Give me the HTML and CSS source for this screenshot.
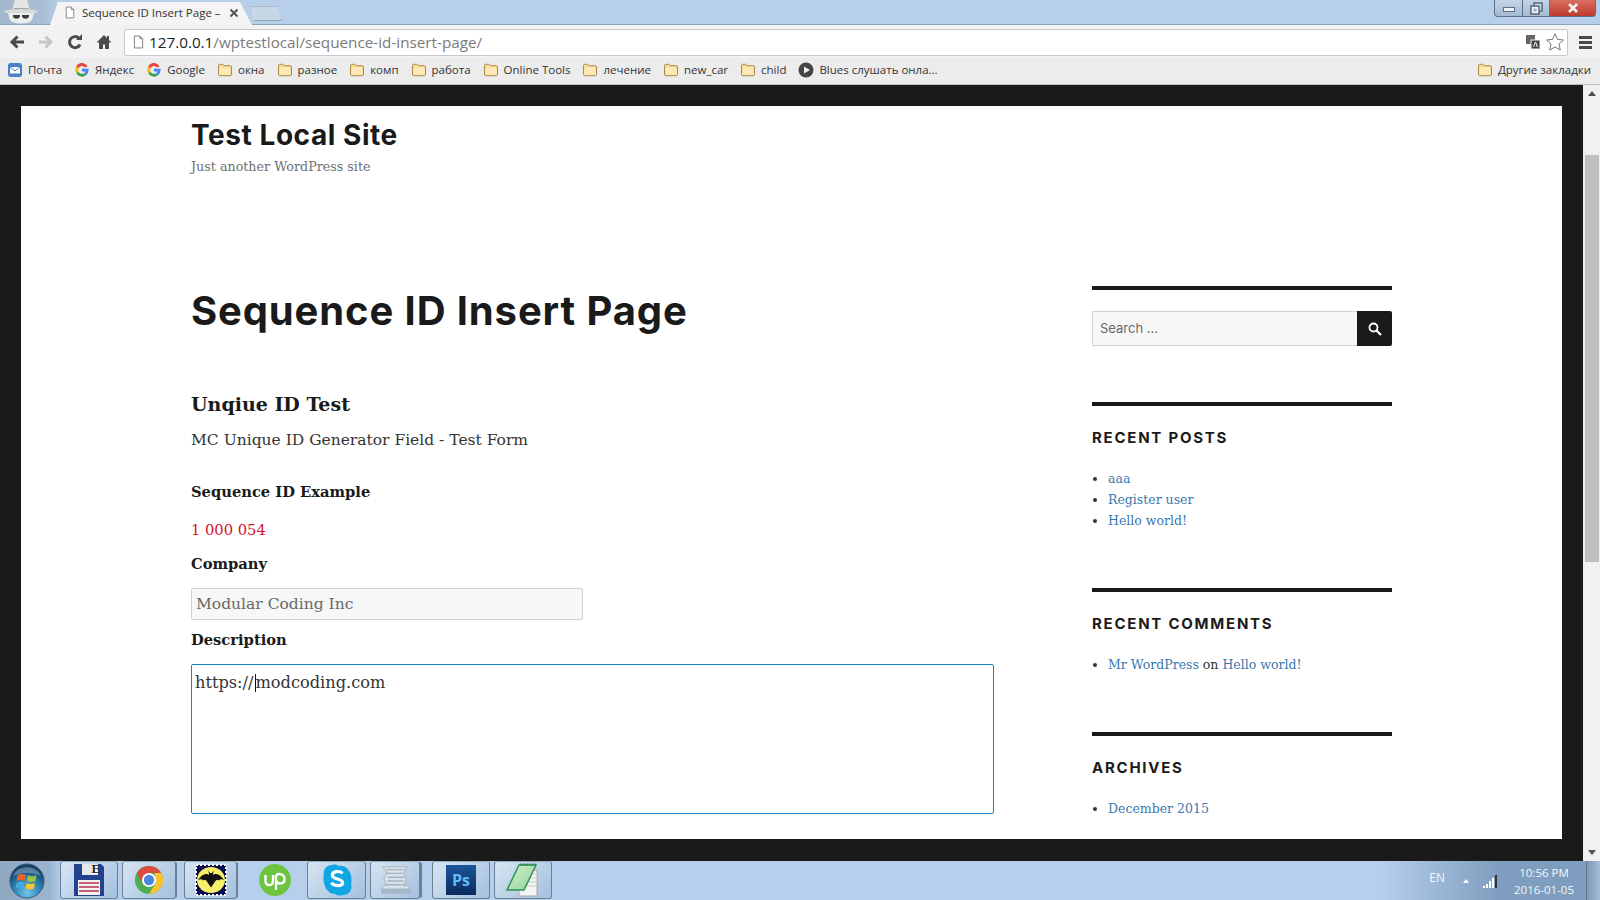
FILE: index.html
```html
<!DOCTYPE html>
<html lang="en">
<head>
<meta charset="utf-8">
<title>Sequence ID Insert Page</title>
<link rel="stylesheet" href="styles.css">
</head>
<body>
<svg class="defs" width="0" height="0" aria-hidden="true">
  <defs>
    <radialGradient id="orbfill" cx="50%" cy="85%" r="75%">
      <stop offset="0" stop-color="#6fc6e8"/>
      <stop offset=".55" stop-color="#2b7fae"/>
      <stop offset="1" stop-color="#123f66"/>
    </radialGradient>
    <linearGradient id="noteg" x1="0" y1="0" x2="1" y2="1">
      <stop offset="0" stop-color="#d5efd0"/>
      <stop offset="1" stop-color="#8fd39a"/>
    </linearGradient>
  </defs>
  <symbol id="folder" viewBox="0 0 16 14">
    <path d="M1.500 2.500c0-.8.5-1.200 1.200-1.200h3.200l1.200 1.400h6.200c.8 0 1.200.5 1.200 1.200v7.600c0 .8-.5 1.200-1.200 1.200H2.700c-.8 0-1.200-.5-1.200-1.200z" fill="#fbd98f" stroke="#a98a4e"/>
    <path d="M2.500 4.300h11v7.400h-11z" fill="#fde9b8"/>
  </symbol>
  <symbol id="google" viewBox="0 0 16 16">
    <path d="M13.600 4.200A6.600 6.600 0 0 0 2.200 4.600l2.300 1.900a3.700 3.700 0 0 1 6.500-1z" fill="#e8453c"/>
    <path d="M2.200 4.600a6.600 6.600 0 0 0 .1 7l2.300-1.800a3.700 3.700 0 0 1-.1-3.300z" fill="#f5bb14"/>
    <path d="M2.300 11.600a6.600 6.600 0 0 0 9.700 1.600l-2.200-1.900a3.700 3.700 0 0 1-5.200-1.500z" fill="#34a853"/>
    <path d="M14.600 8V6.700H8v2.700h3.700a3.400 3.400 0 0 1-1.900 1.900l2.200 1.900A6.500 6.500 0 0 0 14.600 8z" fill="#4285f4"/>
  </symbol>
  <symbol id="doc" viewBox="0 0 12 14">
    <path d="M1.500.5h6l3 3v10h-9z" fill="#fff" stroke="#777"/>
    <path d="M7.500.5v3h3" fill="none" stroke="#777"/>
  </symbol>
</svg>

<header class="browser">
  <div class="tabstrip">
    <svg class="incognito" viewBox="0 0 42 24" width="42" height="24">
      <path d="M12 11 15-1h12l3 12z" fill="#e3e4e4"/>
      <path d="M14 8h14l1 3H13z" fill="#a2a6a6"/>
      <ellipse cx="21" cy="11.500" rx="17" ry="2.500" fill="#d8dada"/>
      <path d="M8 13h26l-2 7c-3 4.500-19 4.500-22 0z" fill="#eceded"/>
      <path d="M13 15h7v1.500c-1 3-6 3-7 0zM22 15h7v1.500c-1 3-6 3-7 0z" fill="#3b3b3b"/>
    </svg>
    <div class="tab">
      <svg class="tab-doc" width="10" height="13"><use href="#doc"/></svg>
      <span class="tab-title">Sequence ID Insert Page –</span>
      <svg class="tab-close" viewBox="0 0 10 10" width="10" height="10"><path d="M1.500 1.500l7 7m0-7l-7 7" stroke="#555" stroke-width="2"/></svg>
    </div>
    <div class="newtab"></div>
    <div class="winctl">
      <div class="wbtn wmin"><span class="wmin-bar"></span></div>
      <div class="wbtn wmax"><svg viewBox="0 0 13 13" width="13" height="13"><path d="M4 1h8v8H4z" fill="#d3e0ec" stroke="#55677a" stroke-width="1.500"/><path d="M1 4h8v8H1z" fill="#eef3f8" stroke="#55677a" stroke-width="1.500"/><path d="M3.500 6.500h3v3h-3z" fill="#9fb3c7"/></svg></div>
      <div class="wbtn wclose"><svg viewBox="0 0 12 10" width="12" height="10"><path d="M2 1l8 8m0-8l-8 8" stroke="#f4f0ee" stroke-width="2.600"/></svg></div>
    </div>
  </div>

  <div class="toolbar">
    <svg class="tool" viewBox="0 0 18 18" width="18" height="18"><path d="M16 9H5M9.500 3.500 4 9l5.500 5.500" fill="none" stroke="#4b4b4b" stroke-width="3"/></svg>
    <svg class="tool" viewBox="0 0 18 18" width="18" height="18"><path d="M2 9h11M8.500 3.500 14 9l-5.500 5.500" fill="none" stroke="#c6c6c6" stroke-width="3"/></svg>
    <svg class="tool" viewBox="0 0 18 18" width="18" height="18"><path d="M14 11.500A5.500 5.500 0 1 1 13 5.300" fill="none" stroke="#4b4b4b" stroke-width="3"/><path d="M10 7h6V1z" fill="#4b4b4b"/></svg>
    <svg class="tool" viewBox="0 0 18 18" width="18" height="18"><path d="M9 2 1.500 9.500H4V16h4v-4.500h2V16h4V9.500h2.500L14 7V3h-2v2z" fill="#4b4b4b"/></svg>
    <div class="omnibox">
      <svg class="omni-doc" width="11" height="14"><use href="#doc"/></svg>
      <span class="url"><span class="url-host">127.0.0.1</span>/wptestlocal/sequence-id-insert-page/</span>
      <svg class="translate" viewBox="0 0 16 16" width="16" height="16"><rect x="1" y="1" width="9" height="9" fill="#666"/><rect x="6" y="6" width="9" height="9" fill="#444" stroke="#eee"/><path d="M8.500 13l2-5 2 5" fill="none" stroke="#fff"/></svg>
      <svg class="star" viewBox="0 0 20 20" width="20" height="20"><path d="M10 1.800l2.500 5.600 6 .6-4.500 4 1.300 6L10 15l-5.300 3 1.300-6-4.500-4 6-.6z" fill="#fff" stroke="#777"/></svg>
    </div>
    <div class="menu"><span></span><span></span><span></span></div>
  </div>

  <nav class="bookmarks">
    <span class="bm"><svg class="bm-icon" viewBox="0 0 16 16" width="16" height="16"><rect x="1" y="1" width="14" height="14" rx="3" fill="#4a7fc9"/><path d="M3 5h10v6.500H3z" fill="#fff"/><path d="M3 5l5 4 5-4" fill="none" stroke="#4a7fc9"/></svg>Почта</span>
    <span class="bm"><svg class="bm-icon" width="16" height="16"><use href="#google"/></svg>Яндекс</span>
    <span class="bm"><svg class="bm-icon" width="16" height="16"><use href="#google"/></svg>Google</span>
    <span class="bm"><svg class="bm-icon" width="16" height="14"><use href="#folder"/></svg>окна</span>
    <span class="bm"><svg class="bm-icon" width="16" height="14"><use href="#folder"/></svg>разное</span>
    <span class="bm"><svg class="bm-icon" width="16" height="14"><use href="#folder"/></svg>комп</span>
    <span class="bm"><svg class="bm-icon" width="16" height="14"><use href="#folder"/></svg>работа</span>
    <span class="bm"><svg class="bm-icon" width="16" height="14"><use href="#folder"/></svg>Online Tools</span>
    <span class="bm"><svg class="bm-icon" width="16" height="14"><use href="#folder"/></svg>лечение</span>
    <span class="bm"><svg class="bm-icon" width="16" height="14"><use href="#folder"/></svg>new_car</span>
    <span class="bm"><svg class="bm-icon" width="16" height="14"><use href="#folder"/></svg>child</span>
    <span class="bm"><svg class="bm-icon" viewBox="0 0 16 16" width="16" height="16"><circle cx="8" cy="8" r="7.500" fill="#444"/><path d="M6 4.500 12 8l-6 3.500z" fill="#eee"/></svg>Blues слушать онла...</span>
    <span class="bm bm-other"><svg class="bm-icon" width="16" height="14"><use href="#folder"/></svg>Другие закладки</span>
  </nav>
</header>

<div class="viewport">
  <main class="page">
    <div class="sheet">
      <div class="site-head">
        <div class="site-title">Test Local Site</div>
        <div class="site-desc">Just another WordPress site</div>
      </div>
      <div class="columns">
        <article class="content">
          <h1 class="page-title">Sequence ID Insert Page</h1>
          <h2 class="form-title">Unqiue ID Test</h2>
          <p class="form-sub">MC Unique ID Generator Field - Test Form</p>
          <div class="label label-first">Sequence ID Example</div>
          <div class="seq">1 000 054</div>
          <div class="label label-company">Company</div>
          <div class="company">Modular Coding Inc</div>
          <div class="label label-desc">Description</div>
          <div class="descr">https://<span class="caret"></span>modcoding.com</div>
        </article>
        <aside class="sidebar">
          <section class="widget widget-search">
            <div class="search">
              <div class="search-input">Search ...</div>
              <div class="search-btn"><svg viewBox="0 0 16 16" width="16" height="16"><circle cx="6.500" cy="6.500" r="4" fill="none" stroke="#fff" stroke-width="1.800"/><path d="M9.500 9.500 14 14" stroke="#fff" stroke-width="2.200"/></svg></div>
            </div>
          </section>
          <section class="widget widget-posts">
            <h3 class="widget-title">RECENT POSTS</h3>
            <ul class="links">
              <li><a>aaa</a></li>
              <li><a>Register user</a></li>
              <li><a>Hello world!</a></li>
            </ul>
          </section>
          <section class="widget widget-comments">
            <h3 class="widget-title">RECENT COMMENTS</h3>
            <ul class="links">
              <li><a>Mr WordPress</a> on <a>Hello world!</a></li>
            </ul>
          </section>
          <section class="widget">
            <h3 class="widget-title">ARCHIVES</h3>
            <ul class="links">
              <li><a>December 2015</a></li>
            </ul>
          </section>
        </aside>
      </div>
    </div>
  </main>
  <div class="scrollbar">
    <div class="sb-arrow"><span class="tri-up"></span></div>
    <div class="sb-track"><div class="sb-thumb"></div></div>
    <div class="sb-arrow"><span class="tri-down"></span></div>
  </div>
</div>

<footer class="taskbar">
  <svg class="orb" viewBox="0 0 38 38" width="36" height="36">
    <circle cx="19" cy="19" r="18" fill="url(#orbfill)" stroke="#3d5a75"/>
    <path d="M9 13c3-2 6-2 9 0l-1 6c-3-1.500-6-1.500-9 0z" fill="#e8612c"/>
    <path d="M20 13c3 1.500 6 1.500 9 0l-1 6c-3 1.500-6 1.500-9 0z" fill="#9cc53d"/>
    <path d="M8 21c3-1.500 5.500-1.500 8.500 0l-1 6c-3-1.500-5.500-1.500-8.500 0z" fill="#47a6e0"/>
    <path d="M18.500 21c3 1.500 6 1.500 9 0l-1 6c-3 1.500-6 1.500-9 0z" fill="#f6c52e"/>
    <path d="M4 14A15.500 13 0 0 1 34 14C26 9 12 9 4 14z" fill="#fff" opacity=".28"/>
  </svg>
  <div class="task task-a">
    <svg viewBox="0 0 32 36" width="32" height="36"><path d="M1 2h27l3 3v29H1z" fill="#24418f"/><path d="M9 2h16v11H9z" fill="#e5e5ea"/><path d="M19 3h6v9h-6z" fill="#fff"/><path d="M5 18h22v15H5z" fill="#f4f1f1"/><path d="M6 21h20M6 25h20M6 29h20" stroke="#b43450" stroke-width="1.600"/><text x="18.500" y="11" class="svg-e">E</text></svg>
  </div>
  <div class="task task-b">
    <svg viewBox="0 0 32 32" width="30" height="30"><circle cx="16" cy="16" r="15" fill="#4cae50"/><path d="M16 1a15 15 0 0 1 13 7.500H16zM3 8.500A15 15 0 0 1 16 1l.1 7.500L9.500 20z" fill="#dd4b3e"/><path d="M29 8.500A15 15 0 0 1 16 31l6.500-11-.5-11.500z" fill="#f6c431"/><circle cx="16" cy="16" r="7.500" fill="#fff"/><circle cx="16" cy="16" r="5.500" fill="#4a86e0"/></svg>
  </div>
  <div class="task task-c">
    <svg viewBox="0 0 32 32" width="32" height="32"><rect x="1" y="1" width="30" height="30" fill="#0a0a50" stroke="#fff" stroke-width="2" stroke-dasharray="2 2"/><ellipse cx="16" cy="16" rx="14" ry="13" fill="#f8ef6a"/><path d="M3 16c3-4 5-6 9-6 1 0 1.500 1 2 1l-.5-4.500L15 9h2l1.500-2.500L18 11c.5 0 1-1 2-1 4 0 6 2 9 6-2-1-4-1-5 .5-1-1-2-1-3 0-1 .5-2 3-5 7-3-4-4-6.500-5-7-1-1-2-1-3 0-1-1.500-3-1.500-5-.5z" fill="#111"/></svg>
  </div>
  <div class="task-plain">
    <svg viewBox="0 0 32 32" width="32" height="32"><circle cx="16" cy="16" r="16" fill="#6fc43f"/><path d="M6.500 11v6c0 5.500 7.500 5.500 7.500 0v-6" fill="none" stroke="#fff" stroke-width="2.400"/><path d="M17 26v-14c1-3 8-3 8.500 2.500.5 6-7 6.500-8.500 2" fill="none" stroke="#fff" stroke-width="2.400"/></svg>
  </div>
  <div class="task task-d">
    <svg viewBox="0 0 32 36" width="30" height="34"><path d="M10 2a8 8 0 0 0-8 9c-2 9 2 22 12 22 3 2 6 2 8 1a9 9 0 0 0 9-12c2-10-3-20-13-19-3-2-6-2-8-1z" fill="#12a5e3"/><path d="M22 11c-3-3-11-3-11 2 0 5 11 3 11 8 0 4-9 4-12 0" fill="none" stroke="#fff" stroke-width="3.400"/></svg>
  </div>
  <div class="task task-e">
    <svg viewBox="0 0 34 34" width="32" height="32"><path d="M4 3h26l-4 7 3 6-3 7h6v8H3v-7l5-2-3-7 4-6z" fill="#dbe3ea" stroke="#9fb0c0"/><path d="M8 6h19M7 10h18M9 14h18M9 18h17M8 22h17" stroke="#a4b3c1" stroke-width="1.500"/><path d="M3 26h31v5H3z" fill="#a5b8ca"/></svg>
  </div>
  <div class="task task-f"><span class="ps">Ps</span></div>
  <div class="task task-g">
    <svg viewBox="0 0 34 34" width="34" height="34"><path d="M20 7h11v26H13v-6z" fill="#f4f4f4" stroke="#aaa"/><path d="M24 11h6M23 15h7M22 19h8M21 23h9" stroke="#c8c8c8"/><path d="M13 2h17L18 27H1z" fill="url(#noteg)" stroke="#2f9155" stroke-width="1.500"/><path d="M14 1.500h16" stroke="#2f7a4d" stroke-width="2" stroke-dasharray="1.500 1.500"/></svg>
  </div>
  <div class="tray">
    <span class="tray-lang">EN</span>
    <span class="tray-arrow"></span>
    <svg class="tray-signal" viewBox="0 0 16 14" width="16" height="14"><path d="M1 12h2v2H1zM4 10h2v4H4zM7 7h2v7H7zM10 4h2v10h-2z" fill="#fff"/><path d="M13 1h2v13h-2z" fill="#333"/></svg>
    <div class="clock"><div>10:56 PM</div><div>2016-01-05</div></div>
    <div class="show-desktop"></div>
  </div>
</footer>
</body>
</html>
```

FILE: styles.css
```css
* { box-sizing: border-box; }
html, body { height: 100%; }
body {
  margin: 0;
  height: 900px;
  width: 1600px;
  overflow: hidden;
  display: flex;
  flex-direction: column;
  font-family: "Open Sans", "Noto Sans", sans-serif;
  background: #1a1a1a;
}
.defs { position: absolute; }

/* Browser chrome */
.browser { flex: none; height: 85px; display: flex; flex-direction: column; }
.tabstrip {
  height: 25px;
  flex: none;
  display: flex;
  align-items: flex-end;
  background: linear-gradient(90deg, #a3b8cc 0, #a9bfd5 44px, #b7cfe9 60px);
  border-bottom: 1px solid #8fa3b8;
}
.incognito { flex: none; margin-right: 8px; }
.tab {
  width: 202px;
  height: 23px;
  flex: none;
  display: flex;
  align-items: center;
  padding: 0 0 2px 15px;
  background: #f4f4f4;
  clip-path: polygon(0 100%, 8px 0, 190px 0, 100% 100%);
  margin-bottom: -1px;
}
.tab-doc { flex: none; margin-right: 7px; }
.tab-title { font-size: 11.500px; color: #333; white-space: nowrap; width: 147px; overflow: hidden; }
.tab-close { flex: none; }
.newtab {
  width: 32px;
  height: 15px;
  flex: none;
  margin: 0 0 3px -2px;
  background: #c7d7e8;
  border: 1px solid #93a7bb;
  border-top-color: #a9bbcd;
  clip-path: polygon(0 0, 84% 0, 100% 100%, 12% 100%);
}
.winctl { margin-left: auto; margin-right: 4px; display: flex; align-self: flex-start; height: 17px; }
.wbtn {
  height: 17px;
  display: flex;
  align-items: center;
  justify-content: center;
  background: linear-gradient(#c3d4e5, #a3bbd3);
  border: 1px solid #5d6f83;
  border-top: none;
}
.wmin { width: 29px; border-radius: 0 0 0 4px; }
.wmax { width: 27px; border-left: none; }
.wclose { width: 46px; border-left: none; background: linear-gradient(#d86f60, #bd3c2c); border-radius: 0 0 4px 0; }
.wmin-bar { width: 12px; height: 5px; margin-top: 3px; background: #eef3f8; border: 1px solid #5c6d7e; }

.toolbar {
  height: 33px;
  flex: none;
  display: flex;
  align-items: center;
  padding: 1px 0 0 8px;
  background: #f2f2f2;
}
.tool { flex: none; margin-right: 11px; }
.omnibox {
  width: 1444px;
  height: 27px;
  flex: none;
  display: flex;
  align-items: center;
  padding-left: 8px;
  background: #fff;
  border: 1px solid #c8c8c8;
  border-radius: 2px;
}
.omni-doc { flex: none; margin-right: 5px; }
.url { font-size: 15.250px; color: #7b7b7b; white-space: nowrap; }
.url-host { color: #222; }
.translate { margin-left: auto; flex: none; }
.star { flex: none; margin: 0 2px 0 4px; }
.menu { margin-left: 11px; width: 13px; display: flex; flex-direction: column; gap: 2px; }
.menu span { height: 3px; background: #4a4a4a; }

.bookmarks {
  flex: 1;
  display: flex;
  align-items: center;
  gap: 12px;
  padding: 0 9px 3px 7px;
  background: #ececec;
  border-bottom: 1px solid #bdbdbd;
  font-size: 11.500px;
  color: #333;
}
.bm { display: flex; align-items: center; white-space: nowrap; }
.bm-icon { flex: none; margin-right: 5px; }
.bm-other { margin-left: auto; }

/* Page viewport */
.viewport { flex: 1; min-height: 0; display: flex; }
.page { flex: 1; min-width: 0; padding: 21px 21px 22px; background: #1a1a1a; }
.sheet { height: 100%; padding-left: 170px; background: #fff; overflow: hidden; color: #1a1a1a; }

.site-head { height: 176px; padding-top: 14px; }
.site-title { font: 700 28px/30px Inter, sans-serif; letter-spacing: .55px; }
.site-desc { font: 12.700px/20px "DejaVu Serif", serif; color: #6f6f6f; margin-top: 7px; }

.columns { display: grid; grid-template-columns: 803px 300px; column-gap: 98px; }
.page-title { font: 700 40px/48px Inter, sans-serif; margin: 0; padding-top: 5px; letter-spacing: .87px; }
.form-title { font: 700 19px/28px "DejaVu Serif", serif; margin: 55px 0 0; }
.form-sub { font: 15.500px/24px "DejaVu Serif", serif; margin: 10px 0 0; color: #333; }
.label { font: 700 14.700px/24px "DejaVu Serif", serif; }
.label-first { margin-top: 28px; }
.label-company { margin-top: 10px; }
.label-desc { margin-top: 8px; }
.seq { font: 14.700px/24px "DejaVu Serif", serif; color: #d0112b; margin-top: 14px; }
.company {
  width: 392px;
  height: 32px;
  margin-top: 12px;
  padding-left: 4px;
  background: #f7f7f7;
  border: 1px solid #d1d1d1;
  border-radius: 2px;
  font: 15.500px/31px "DejaVu Serif", serif;
  color: #686868;
}
.descr {
  width: 803px;
  height: 150px;
  margin-top: 12px;
  padding: 6px 3px;
  background: #fff;
  border: 1px solid #1a7fc0;
  border-radius: 2px;
  font: 16.200px/24px "DejaVu Serif", serif;
  color: #333;
}
.caret { display: inline-block; width: 1px; height: 18px; margin: 0 -1px 0 2px; vertical-align: -4px; background: #111; }

.sidebar { margin-top: 4px; padding-bottom: 20px; }
.widget { border-top: 4px solid #1a1a1a; }
.widget-search { height: 116px; padding-top: 21px; }
.search { display: flex; height: 35px; }
.search-input {
  flex: 1;
  padding-left: 7px;
  background: #f7f7f7;
  border: 1px solid #d1d1d1;
  border-right: none;
  border-radius: 2px 0 0 2px;
  font: 13px/33px Inter, sans-serif;
  color: #686868;
}
.search-btn {
  width: 35px;
  display: flex;
  align-items: center;
  justify-content: center;
  background: #1a1a1a;
  border-radius: 0 2px 2px 0;
}
.widget-title { font: 700 15px/20px Inter, sans-serif; letter-spacing: 1.750px; margin: 22px 0 0; color: #1a1a1a; }
.links { margin: 20px 0 0; padding: 0 0 0 16px; font: 12.500px/21px "DejaVu Serif", serif; color: #333; }
.links a { color: #3a78b0; }
.widget-posts { height: 186px; }
.widget-comments { height: 144px; }

/* Scrollbar */
.scrollbar { flex: none; width: 17px; display: flex; flex-direction: column; background: #f1f1f1; }
.sb-arrow { height: 17px; flex: none; display: flex; align-items: center; justify-content: center; }
.tri-up { border: 4px solid transparent; border-top: none; border-bottom: 5px solid #505050; }
.tri-down { border: 4px solid transparent; border-bottom: none; border-top: 5px solid #505050; }
.sb-track { flex: 1; padding-top: 53px; }
.sb-thumb { height: 407px; margin: 0 1px 0 2px; background: #bfbfbf; }

/* Windows taskbar */
.taskbar {
  height: 39px;
  flex: none;
  display: flex;
  align-items: flex-start;
  padding-left: 9px;
  background: linear-gradient(90deg, #8fa6bf 0, #9cb5cf 50px, #b5cfec 62px, #b5cfec 1380px, #7f9dbe 1500px, #7f9dbe 100%);
}
.orb { flex: none; margin: 2px 15px 0 0; }
.task, .task-plain {
  height: 38px;
  flex: none;
  display: flex;
  align-items: center;
  justify-content: center;
  border-radius: 3px;
}
.task {
  border: 1px solid #6c7f94;
  border-top-color: #93a7bc;
  background: linear-gradient(135deg, #d6e4f2, #a9c4e0 90%);
}
.task-a { width: 58px; margin-right: 4px; }
.task-b { width: 54px; margin-right: 8px; box-shadow: 2px 0 0 -1px #6c7f94; }
.task-c { width: 53px; margin-right: 6px; box-shadow: 2px 0 0 -1px #6c7f94; }
.task-plain { width: 64px; }
.task-d { width: 59px; margin-right: 4px; }
.task-e { width: 50px; margin-right: 12px; box-shadow: 3px 0 0 -1px #6c7f94; }
.task-f { width: 58px; margin-right: 4px; }
.task-g { width: 58px; }
.svg-e { font: 700 13px "Liberation Serif", serif; fill: #222; }
.ps {
  width: 30px;
  height: 30px;
  display: flex;
  align-items: center;
  justify-content: center;
  background: linear-gradient(#1a569c, #0b2a5c);
  font: 700 16px "Open Sans", sans-serif;
  color: #62bdf2;
}
.tray {
  margin-left: auto;
  height: 100%;
  display: flex;
  align-items: center;
  font-size: 12px;
  color: #f2f6fa;
}
.tray-lang { margin-right: 18px; margin-top: -6px; }
.tray-arrow { border: 3.500px solid transparent; border-top: none; border-bottom: 4px solid #fff; margin-right: 13px; }
.tray-signal { margin-right: 11px; }
.clock { width: 70px; text-align: center; line-height: 17px; font-size: 11.500px; }
.show-desktop { width: 14px; height: 100%; margin-left: 7px; background: linear-gradient(90deg, #7d97b3, #a6bdd6); border-left: 1px solid #5f7690; }
```
